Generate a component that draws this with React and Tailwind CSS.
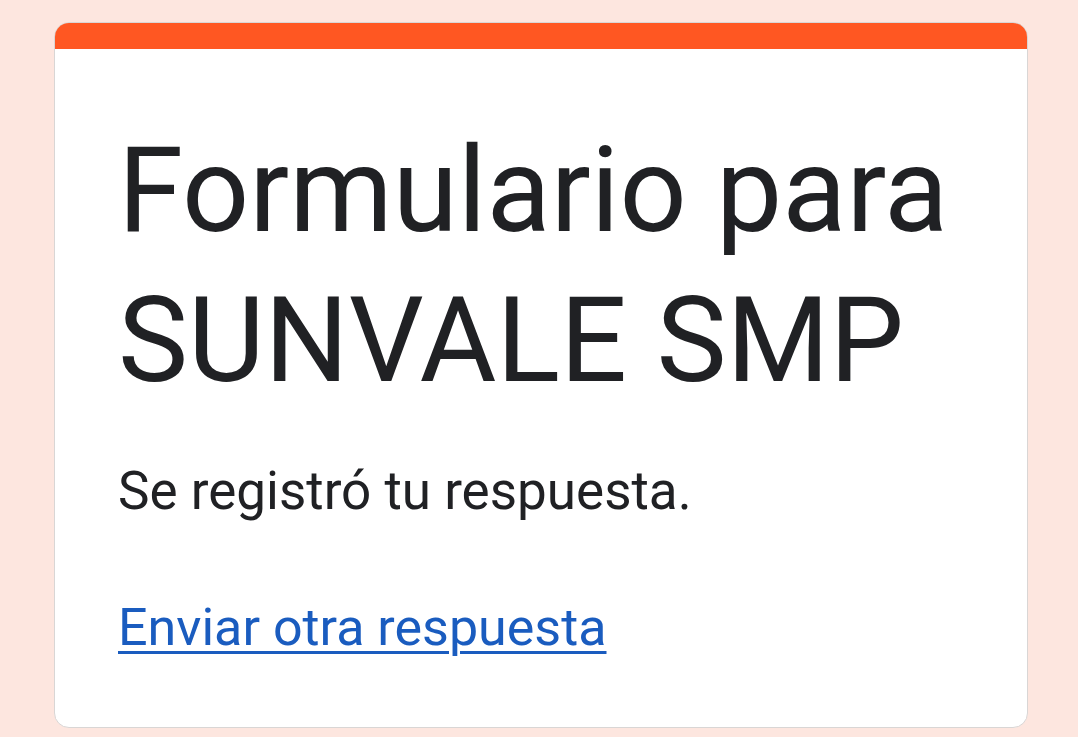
import React from 'react';

export default function App() {
  return (
    <div className="min-h-[737px] w-full bg-[#fde6df] pt-[22px] pl-[54px] pr-[50px] font-['Roboto',sans-serif]">
      <div className="w-[974px] overflow-hidden rounded-[15px] border border-[#d9d6d5] bg-white">
        <div className="h-[26px] bg-[#ff5722]" />
        <div className="flex flex-col pl-[63px] pr-[40px] pt-[67px] pb-[59px]">
          <h1 className="text-[118px] leading-[150px] font-normal text-[#202124]">
            Formulario para SUNVALE SMP
          </h1>
          <p className="mt-[35px] text-[53px] leading-[80px] text-[#202124]">
            Se registró tu respuesta.
          </p>
          <a
            href="#"
            className="mt-[57px] self-start text-[52px] leading-[80px] text-[#1a5cbf] underline decoration-[3px] underline-offset-[6px]"
          >
            Enviar otra respuesta
          </a>
        </div>
      </div>
    </div>
  );
}
